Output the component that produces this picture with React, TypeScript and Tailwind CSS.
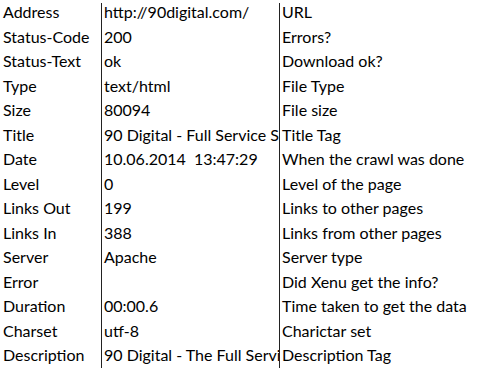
import React from 'react';

const rows: [string, string, string][] = [
  ['Address', 'http://90digital.com/', 'URL'],
  ['Status-Code', '200', 'Errors?'],
  ['Status-Text', 'ok', 'Download ok?'],
  ['Type', 'text/html', 'File Type'],
  ['Size', '80094', 'File size'],
  ['Title', '90 Digital - Full Service Solutions', 'Title Tag'],
  ['Date', '10.06.2014  13:47:29', 'When the crawl was done'],
  ['Level', '0', 'Level of the page'],
  ['Links Out', '199', 'Links to other pages'],
  ['Links In', '388', 'Links from other pages'],
  ['Server', 'Apache', 'Server type'],
  ['Error', '', 'Did Xenu get the info?'],
  ['Duration', '00:00.6', 'Time taken to get the data'],
  ['Charset', 'utf-8', 'Charictar set'],
  ['Description', '90 Digital - The Full Service Agency', 'Description Tag'],
];

export default function App() {
  return (
    <div className="w-[479px] h-[373px] bg-white overflow-hidden text-black text-[16px] font-['Lato','Liberation_Sans',sans-serif]">
      <div className="flex pt-[3px] h-[368px]">
        {/* field names */}
        <div className="w-[101px] shrink-0 pl-[3px]">
          {rows.map(([name]) => (
            <div key={name} className="h-[24.5px] leading-[17px] whitespace-nowrap">{name}</div>
          ))}
        </div>
        {/* values, clipped at the next column like a spreadsheet cell */}
        <div className="w-[178px] shrink-0 border-l-[1.5px] border-[#222] pl-[2px] overflow-hidden">
          {rows.map(([name, value]) => (
            <div key={name} className="h-[24.5px] leading-[17px] whitespace-pre">{value}</div>
          ))}
        </div>
        {/* notes */}
        <div className="flex-1 border-l-[1.5px] border-[#222] pl-[2px]">
          {rows.map(([name, , note]) => (
            <div key={name} className="h-[24.5px] leading-[17px] whitespace-nowrap">{note}</div>
          ))}
        </div>
      </div>
    </div>
  );
}
